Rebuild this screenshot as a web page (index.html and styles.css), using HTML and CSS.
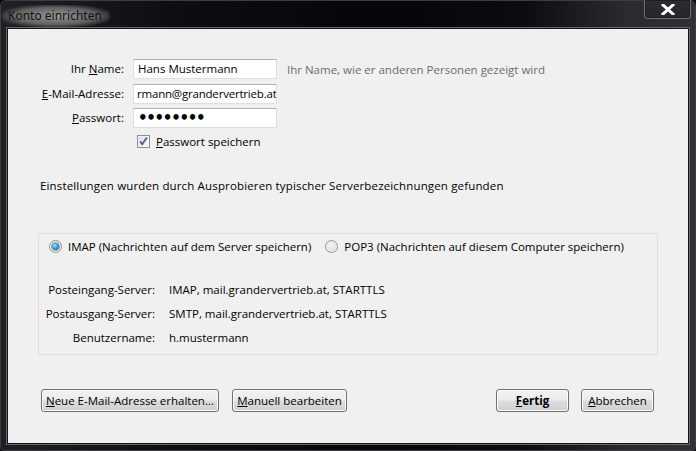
FILE: index.html
```html
<!DOCTYPE html>
<html lang="de">
<head>
<meta charset="utf-8">
<title>Konto einrichten</title>
<link rel="stylesheet" href="styles.css">
</head>
<body>
<div class="window">
  <div class="titlebar">
    <span class="title">Konto einrichten</span>
    <div class="close" aria-label="Schließen">
      <svg width="14" height="11" viewBox="0 0 14 11"><path d="M2 1 L12 10 M12 1 L2 10" stroke="#ffffff" stroke-width="3" stroke-linecap="square"/></svg>
    </div>
  </div>
  <div class="client">
    <div class="form">
      <label class="lbl">Ihr <u>N</u>ame:</label>
      <div class="textbox">Hans Mustermann</div>
      <span class="hint">Ihr Name, wie er anderen Personen gezeigt wird</span>

      <label class="lbl"><u>E</u>-Mail-Adresse:</label>
      <div class="textbox tight">rmann@grandervertrieb.at</div>
      <span></span>

      <label class="lbl"><u>P</u>asswort:</label>
      <div class="textbox"><span class="dots">••••••••</span></div>
      <span></span>

      <span></span>
      <div class="check-row">
        <span class="checkbox">
          <svg width="11" height="11" viewBox="0 0 11 11"><path d="M2.2 5.4 L4.3 8.3 L8.8 1.6" fill="none" stroke="#4b5f96" stroke-width="1.8"/></svg>
        </span>
        <span><u>P</u>asswort speichern</span>
      </div>
      <span></span>
    </div>

    <p class="info">Einstellungen wurden durch Ausprobieren typischer Serverbezeichnungen gefunden</p>

    <div class="group">
      <div class="radios">
        <div class="radio-item">
          <span class="radio checked"></span>
          <span>IMAP (Nachrichten auf dem Server speichern)</span>
        </div>
        <div class="radio-item">
          <span class="radio"></span>
          <span>POP3 (Nachrichten auf diesem Computer speichern)</span>
        </div>
      </div>
      <div class="servers">
        <span class="slbl">Posteingang-Server:</span>
        <span>IMAP, mail.grandervertrieb.at, STARTTLS</span>
        <span class="slbl">Postausgang-Server:</span>
        <span>SMTP, mail.grandervertrieb.at, STARTTLS</span>
        <span class="slbl">Benutzername:</span>
        <span>h.mustermann</span>
      </div>
    </div>

    <div class="buttons">
      <div class="btn-left">
        <button class="btn btn-wide"><u>N</u>eue E-Mail-Adresse erhalten...</button>
        <button class="btn btn-mid"><u>M</u>anuell bearbeiten</button>
      </div>
      <div class="btn-right">
        <button class="btn btn-default"><u>F</u>ertig</button>
        <button class="btn"><u>A</u>bbrechen</button>
      </div>
    </div>
  </div>
</div>
</body>
</html>
```
FILE: styles.css
```css
* { box-sizing: border-box; }
html, body { margin: 0; padding: 0; }
body {
  width: 696px;
  height: 451px;
  overflow: hidden;
  background: #0a0b0e;
  font-family: "Open Sans", "Noto Sans", "DejaVu Sans", sans-serif;
  font-size: 11.5px;
  color: #000;
}
.window {
  width: 696px;
  height: 451px;
  display: flex;
  flex-direction: column;
  background: linear-gradient(90deg, #1f2024 0%, #0d0e12 25%, #050609 55%, #0b0c10 75%, #2a2b2f 90%, #303135 100%);
  border-radius: 6px 6px 4px 4px;
  border: 1px solid #3c3d41;
}
.titlebar {
  height: 27px;
  flex: none;
  display: flex;
  justify-content: space-between;
  align-items: flex-start;
  padding-left: 1px;
  padding-right: 4px;
}
.title {
  margin-top: 4px;
  padding: 2px 8px 3px 6px;
  font-family: "Noto Sans", "Open Sans", sans-serif;
  font-size: 12px;
  color: #15110d;
  background: radial-gradient(ellipse at center, rgba(235,235,235,0.6) 0%, rgba(200,200,200,0.4) 55%, rgba(120,120,120,0) 80%);
  border-radius: 12px;
}
.close {
  width: 47px;
  height: 19px;
  margin-top: -1px;
  border: 1px solid #6f7074;
  border-top: none;
  border-radius: 0 0 4px 4px;
  box-shadow: inset 0 0 0 1px #1e1f23;
  background: linear-gradient(#2c2d31, #26272b);
  display: flex;
  align-items: center;
  justify-content: center;
}
.client {
  flex: 1;
  margin: 0 6px 6px 6px;
  background: #f0f0f0;
  border: 1px solid #141414;
  box-shadow: 0 0 0 1px #67686c;
  display: flex;
  flex-direction: column;
}
.form {
  margin-top: 30px;
  display: grid;
  grid-template-columns: 116px 144px auto;
  column-gap: 9px;
  row-gap: 4.5px;
  align-items: center;
}
.lbl { text-align: right; line-height: 16px; }
.textbox {
  height: 20px;
  border: 1px solid #dbdfe6;
  border-top-color: #abadb3;
  background: #fff;
  padding: 0 4px;
  line-height: 18px;
  white-space: nowrap;
  overflow: hidden;
}
.textbox.tight {
  padding: 0 1px 0 3px;
  letter-spacing: -0.2px;
}
.dots {
  font-family: "DejaVu Sans", sans-serif;
  font-size: 15px;
  font-weight: bold;
  letter-spacing: -1.3px;
  line-height: 18px;
}
.hint { color: #6d6d6d; margin-left: 1px; white-space: nowrap; }
.check-row {
  display: flex;
  align-items: center;
  gap: 6px;
  margin-left: 4px;
  margin-top: 1px;
  line-height: 16px;
}
.checkbox {
  width: 13px;
  height: 13px;
  border: 1px solid #8f8f8f;
  background: linear-gradient(135deg, #dcdcdc, #fbfbfb);
  box-shadow: inset 0 0 0 1px #f4f4f4;
  display: flex;
  align-items: center;
  justify-content: center;
}
.info {
  margin: 28px 0 0 32px;
  line-height: 16px;
  letter-spacing: 0.15px;
}
.group {
  margin: 39px 30px 0 30px;
  border: 1px solid #dcdcdc;
  border-radius: 3px;
  padding: 5px 0 7px 0;
  height: 122px;
}
.radios {
  display: flex;
  gap: 14px;
  padding-left: 10px;
  line-height: 16px;
}
.radio-item { display: flex; align-items: center; gap: 6px; }
.radio {
  width: 13px;
  height: 13px;
  border-radius: 50%;
  border: 1px solid #939393;
  background: radial-gradient(circle at 45% 40%, #f6f6f6 0%, #e2e2e2 60%, #c8c8c8 100%);
  box-shadow: inset 0 0 0 1px #f2f2f2;
  display: flex;
  align-items: center;
  justify-content: center;
}
.radio.checked::after {
  content: "";
  width: 7px;
  height: 7px;
  border-radius: 50%;
  background: radial-gradient(circle at 40% 35%, #a6e4ff 0%, #3c9fd8 45%, #155f95 100%);
  box-shadow: 0 0 0 0.5px #2a5a80;
}
.servers {
  margin-top: 27px;
  display: grid;
  grid-template-columns: 116px auto;
  column-gap: 14px;
  row-gap: 8px;
  line-height: 16px;
}
.slbl { text-align: right; }
.buttons {
  margin-top: 34px;
  padding: 0 34px 0 33px;
  display: flex;
  justify-content: space-between;
}
.btn-left, .btn-right { display: flex; gap: 12px; }
.btn-left { gap: 13px; }
.btn {
  height: 23px;
  width: 73px;
  padding: 0;
  font: inherit;
  color: #000;
  border: 1px solid #707070;
  border-radius: 3px;
  background: linear-gradient(#f2f2f2 0%, #ebebeb 48%, #dddddd 52%, #cfcfcf 100%);
  box-shadow: inset 0 0 0 1px #fcfcfc;
  line-height: 19px;
  white-space: nowrap;
}
.btn-wide { width: 178px; }
.btn-mid { width: 115px; }
.btn-default { font-weight: bold; }
```
